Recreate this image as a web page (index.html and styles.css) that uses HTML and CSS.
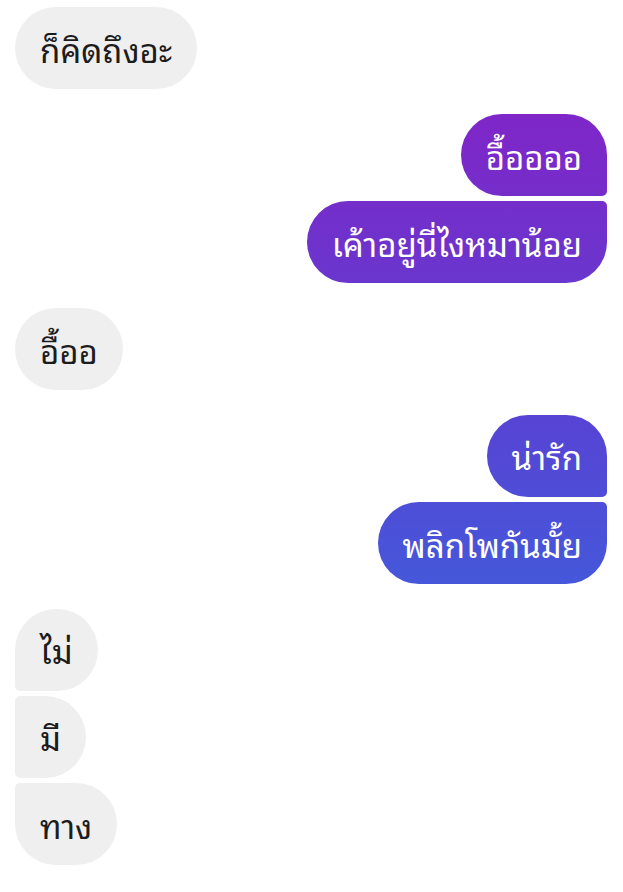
FILE: index.html
```html
<!DOCTYPE html>
<html lang="th">
<head>
<meta charset="utf-8">
<link rel="stylesheet" href="styles.css">
</head>
<body>
<div class="chat">
  <div class="group in">
    <div class="bubble">ก็คิดถึงอะ</div>
  </div>
  <div class="group out">
    <div class="bubble first">อื้ออออ</div>
    <div class="bubble last">เค้าอยู่นี่ไงหมาน้อย</div>
  </div>
  <div class="group in">
    <div class="bubble">อื้ออ</div>
  </div>
  <div class="group out">
    <div class="bubble first">น่ารัก</div>
    <div class="bubble last">พลิกโพกันมั้ย</div>
  </div>
  <div class="group in">
    <div class="bubble first">ไม่</div>
    <div class="bubble mid">มี</div>
    <div class="bubble last">ทาง</div>
  </div>
</div>
</body>
</html>
```
FILE: styles.css
```css
html, body {
  margin: 0;
  padding: 0;
  background: #ffffff;
}
.chat {
  display: flex;
  flex-direction: column;
  gap: 24.6px;
  padding: 7px 16px 0 15px;
  font-family: "Noto Sans Thai Looped", "Noto Serif Thai", "Noto Sans Thai", "Noto Sans", sans-serif;
  font-size: 33px;
}
.group {
  display: flex;
  flex-direction: column;
  gap: 4.8px;
}
.group.in { align-items: flex-start; }
.group.out { align-items: flex-end; }
.bubble {
  height: 82.3px;
  box-sizing: border-box;
  padding: 0 25px;
  display: flex;
  align-items: center;
  border-radius: 41px;
}
.in .bubble {
  background: #efefef;
  color: #1c1c1c;
}
.out .bubble {
  color: #ffffff;
  background: linear-gradient(180deg, #8a1ec6 0px, #7b29c9 150px, #6a36cd 280px, #5744d4 420px, #4458da 590px, #3a62dc 700px);
  background-attachment: fixed;
}
.in .first { border-bottom-left-radius: 5px; }
.in .mid { border-top-left-radius: 5px; border-bottom-left-radius: 5px; }
.in .last { border-top-left-radius: 5px; }
.out .first { border-bottom-right-radius: 5px; }
.out .last { border-top-right-radius: 5px; }
```
